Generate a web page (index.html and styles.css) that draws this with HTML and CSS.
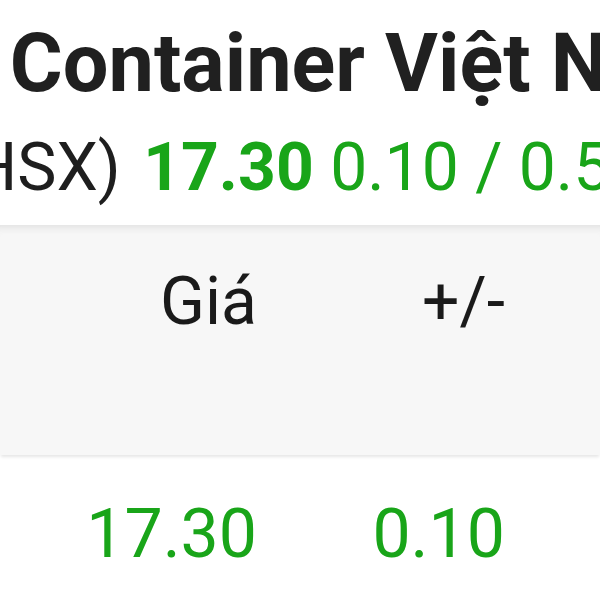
FILE: index.html
```html
<!DOCTYPE html>
<html lang="vi">
<head>
  <meta charset="UTF-8">
  <title>VSC - Container Việt Nam</title>
  <link rel="stylesheet" href="styles.css">
</head>
<body>
  <div class="stock">
    <h1 class="stock-name">phần Container Việt Nam</h1>
    <div class="stock-quote">
      <span class="exchange">VSC (HSX)</span>
      <span class="price">17.30</span>
      <span class="change">0.10 / 0.58%</span>
    </div>
  </div>

  <div class="table">
    <div class="table-head">
      <div class="cell">Giá</div>
      <div class="cell">+/-</div>
      <div class="cell"></div>
    </div>
    <div class="table-row">
      <div class="cell up">17.30</div>
      <div class="cell up">0.10</div>
      <div class="cell"></div>
    </div>
  </div>
</body>
</html>
```

FILE: styles.css
```css
body {
  margin: 0;
  background: #fff;
  font-family: Roboto, 'Noto Sans', sans-serif;
  color: #1e1e1e;
  overflow: hidden;
  width: 600px;
  height: 600px;
}

.stock {
  padding-top: 18px;
  white-space: nowrap;
}

.stock-name {
  margin: 0 0 18px -190px;
  font-size: 81px;
  font-weight: 700;
  line-height: 92px;
  color: #202020;
}

.stock-quote {
  margin-left: -193px;
  font-size: 66px;
  line-height: 80px;
}

.price {
  color: #19a519;
  font-weight: 700;
  margin-left: 6px;
}

.change {
  color: #19a519;
}

.table {
  margin-top: 17px;
}

.table-head,
.table-row {
  display: grid;
  grid-template-columns: 257px 248px 1fr;
  line-height: 80px;
}

.table-head {
  background: #f7f7f7;
  height: 230px;
  box-sizing: border-box;
  padding-top: 37px;
  font-size: 66px;
  color: #1a1a1a;
  box-shadow: inset 0 9px 7px -6px #e2e2e2, 0 3px 3px -1px #e6e6e6;
}

.table-row {
  padding-top: 39px;
  font-size: 68px;
}

.cell {
  text-align: right;
}

.up {
  color: #19a519;
}
```
